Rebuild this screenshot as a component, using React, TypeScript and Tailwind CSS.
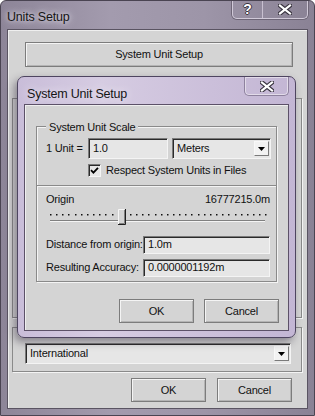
import React from "react";

const font = { fontFamily: '"Liberation Sans", Arial, sans-serif' };

function Btn({ label, className = "" }: { label: string; className?: string }) {
  return (
    <div
      className={`flex items-center justify-center bg-[#d4d4d4] border border-[#7c7c7c] shadow-[inset_1px_1px_0_#f4f4f4,inset_-1px_-1px_0_#b4b4b4] text-[11px] text-[#111] tracking-[-0.2px] ${className}`}
    >
      {label}
    </div>
  );
}

function Field({ value, className = "" }: { value: string; className?: string }) {
  return (
    <div
      className={`flex items-center bg-[#e6e6e6] border-t border-l border-[#7a7a7a] border-b border-r border-b-[#f4f4f4] border-r-[#f4f4f4] shadow-[inset_1px_1px_0_#2a2a2a] pl-[4px] text-[11px] text-[#111] tracking-[-0.2px] ${className}`}
    >
      {value}
    </div>
  );
}

function Arrow() {
  return (
    <div className="w-[15px] h-[15px] bg-[#f2f2f2] border border-[#f8f8f8] border-b-[#7a7a7a] border-r-[#7a7a7a] flex items-center justify-center">
      <svg width="7" height="4" viewBox="0 0 7 4">
        <path d="M0 0H7L3.5 4Z" fill="#000" />
      </svg>
    </div>
  );
}

function Combo({ value, className = "" }: { value: string; className?: string }) {
  return (
    <div
      className={`flex items-center justify-between bg-[#e6e6e6] border-t border-l border-[#7a7a7a] border-b border-r border-b-[#f4f4f4] border-r-[#f4f4f4] shadow-[inset_1px_1px_0_#2a2a2a] pl-[4px] pr-[1px] text-[11px] text-[#111] tracking-[-0.2px] ${className}`}
    >
      <span>{value}</span>
      <Arrow />
    </div>
  );
}

function CapX({ size = 14 }: { size?: number }) {
  return (
    <svg width={size} height={size - 3} viewBox="0 0 14 11">
      <path d="M2 1.5L12 9.5M12 1.5L2 9.5" stroke="#3a3540" strokeWidth="4.4" strokeLinecap="square" />
      <path d="M2 1.5L12 9.5M12 1.5L2 9.5" stroke="#fff" strokeWidth="2.2" strokeLinecap="square" />
    </svg>
  );
}

export default function App() {
  const dots = Array.from({ length: 36 }, (_, i) => 4 + i * 6.15);
  return (
    <div
      style={font}
      className="relative w-[315px] h-[416px] overflow-hidden rounded-t-[6px] border border-[#4a4452] bg-[linear-gradient(90deg,#8d8598_0%,#a39bae_35%,#9d95a8_65%,#8a8295_100%)]"
    >
      {/* Title bar */}
      <div className="flex h-[28px] items-start">
        <span className="ml-[6px] mt-[7px] text-[12.5px] text-[#151515] tracking-[-0.2px] [text-shadow:0_0_8px_#e8e4ee,0_0_4px_#d8d2e0]">
          Units Setup
        </span>
        <div className="ml-auto mr-[6px] flex h-[19px] -mt-px rounded-b-[5px] border border-t-0 border-[#d0c9d8] shadow-[0_0_0_1px_#6e6677] overflow-hidden">
          <div className="w-[30px] flex items-center justify-center border-r border-[#c8c0d0] text-[14px] font-bold text-white [text-shadow:1px_0_0_#3a3540,-1px_0_0_#3a3540,0_1px_0_#3a3540,0_-1px_0_#3a3540]">
            ?
          </div>
          <div className="w-[44px] flex items-center justify-center">
            <CapX />
          </div>
        </div>
      </div>

      {/* Client area */}
      <div className="mx-[6px] h-[380px] border border-[#5a5462] bg-[#d4d4d4] shadow-[inset_1px_1px_0_#efefef] flex flex-col">
        <Btn label="System Unit Setup" className="ml-[17px] mt-[12px] w-[268px] h-[25px]" />
        <div className="ml-[4px] mt-[31px] w-[290px] h-[220px] border border-[#8a8a8a] shadow-[1px_1px_0_#f4f4f4]" />
        <div className="ml-[4px] mt-[9px] w-[290px] h-[45px] border border-[#8a8a8a] shadow-[1px_1px_0_#f4f4f4] pl-[12px] pt-[15px]">
          <Combo value="International" className="w-[266px] h-[21px]" />
        </div>
        <div className="mt-[6px] flex justify-end gap-[11px] pr-[15px]">
          <Btn label="OK" className="w-[75px] h-[24px]" />
          <Btn label="Cancel" className="w-[75px] h-[24px]" />
        </div>
      </div>

      {/* Inner dialog (overlapping window) */}
      <div className="absolute left-[16px] top-[75px] w-[279px] h-[262px] rounded-[7px] border border-[#4e4560] bg-[linear-gradient(90deg,#c9bdd9_0%,#d6cce2_30%,#cbbfda_70%,#c3b6d4_100%)] shadow-[-3px_4px_8px_rgba(40,30,50,0.45)] flex flex-col">
        <div className="flex h-[27px] items-start">
          <span className="ml-[9px] mt-[8px] text-[12.5px] text-[#151515] tracking-[-0.2px] [text-shadow:0_0_8px_#f4f0f8]">
            System Unit Setup
          </span>
          <div className="ml-auto mr-[6px] w-[45px] h-[19px] rounded-b-[5px] border border-t-0 border-[#8e829e] shadow-[inset_0_0_0_1px_#e2dbe9] flex items-center justify-center">
            <CapX />
          </div>
        </div>
        <div className="mx-[6px] h-[227px] border border-[#5c5168] bg-[#d4d4d4] shadow-[inset_1px_1px_0_#efefef] flex flex-col">
          {/* Group box */}
          <div className="relative ml-[11px] mt-[21px] w-[241px] h-[156px] border border-[#8a8a8a] shadow-[1px_1px_0_#f4f4f4,inset_1px_1px_0_#f4f4f4] flex flex-col">
            <span className="absolute left-[9px] -top-[8px] px-[3px] bg-[#d4d4d4] text-[11px] text-[#111] tracking-[-0.2px]">
              System Unit Scale
            </span>
            <div className="mt-[11px] flex items-center h-[21px] pl-[9px] text-[11px] text-[#111] tracking-[-0.2px]">
              <span className="w-[42px]">1 Unit =</span>
              <Field value="1.0" className="w-[80px] h-[21px]" />
              <Combo value="Meters" className="ml-[4px] w-[99px] h-[21px]" />
            </div>
            <div className="mt-[3px] ml-[51px] flex items-center gap-[5px] text-[11px] text-[#111] tracking-[-0.2px]">
              <div className="w-[13px] h-[13px] bg-[#e6e6e6] border-t border-l border-[#7a7a7a] border-b border-r border-b-[#f4f4f4] border-r-[#f4f4f4] shadow-[inset_1px_1px_0_#2a2a2a] flex items-center justify-center">
                <svg width="9" height="9" viewBox="0 0 9 9">
                  <path d="M1 4.2L3.4 6.6L8 1.8" stroke="#000" strokeWidth="1.8" fill="none" />
                </svg>
              </div>
              <span>Respect System Units in Files</span>
            </div>
            <div className="mt-[6px] border-t border-[#8a8a8a] shadow-[0_1px_0_#f4f4f4]" />
            <div className="mt-[7px] flex justify-between pl-[9px] pr-[6px] text-[11px] text-[#111] tracking-[-0.2px] leading-[13px]">
              <span>Origin</span>
              <span>16777215.0m</span>
            </div>
            <svg className="ml-[9px] mt-[1px]" width="224" height="20" viewBox="0 0 224 20">
              {dots.map((x) => (
                <rect key={x} x={Math.round(x)} y="7" width="1.5" height="1.5" fill="#111" />
              ))}
              <line x1="4" y1="13.5" x2="219" y2="13.5" stroke="#808080" />
              <line x1="4" y1="14.5" x2="219" y2="14.5" stroke="#f4f4f4" />
              <rect x="72" y="2" width="7" height="15" fill="#d4d4d4" />
              <path d="M72.5 17V2.5H78.5" stroke="#f6f6f6" fill="none" />
              <path d="M72 17.5H79.5V2" stroke="#202020" fill="none" />
              <path d="M73 16.5H78.5V3" stroke="#808080" fill="none" />
            </svg>
            <div className="mt-[9px] flex items-center pl-[9px] text-[11px] text-[#111] tracking-[-0.2px]">
              <span className="w-[97px]">Distance from origin:</span>
              <Field value="1.0m" className="w-[127px] h-[18px]" />
            </div>
            <div className="mt-[5px] flex items-center pl-[9px] text-[11px] text-[#111] tracking-[-0.2px]">
              <span className="w-[97px]">Resulting Accuracy:</span>
              <Field value="0.0000001192m" className="w-[127px] h-[18px]" />
            </div>
          </div>
          <div className="mt-[17px] flex justify-end gap-[10px] pr-[9px]">
            <Btn label="OK" className="w-[75px] h-[24px]" />
            <Btn label="Cancel" className="w-[75px] h-[24px]" />
          </div>
        </div>
      </div>
    </div>
  );
}
